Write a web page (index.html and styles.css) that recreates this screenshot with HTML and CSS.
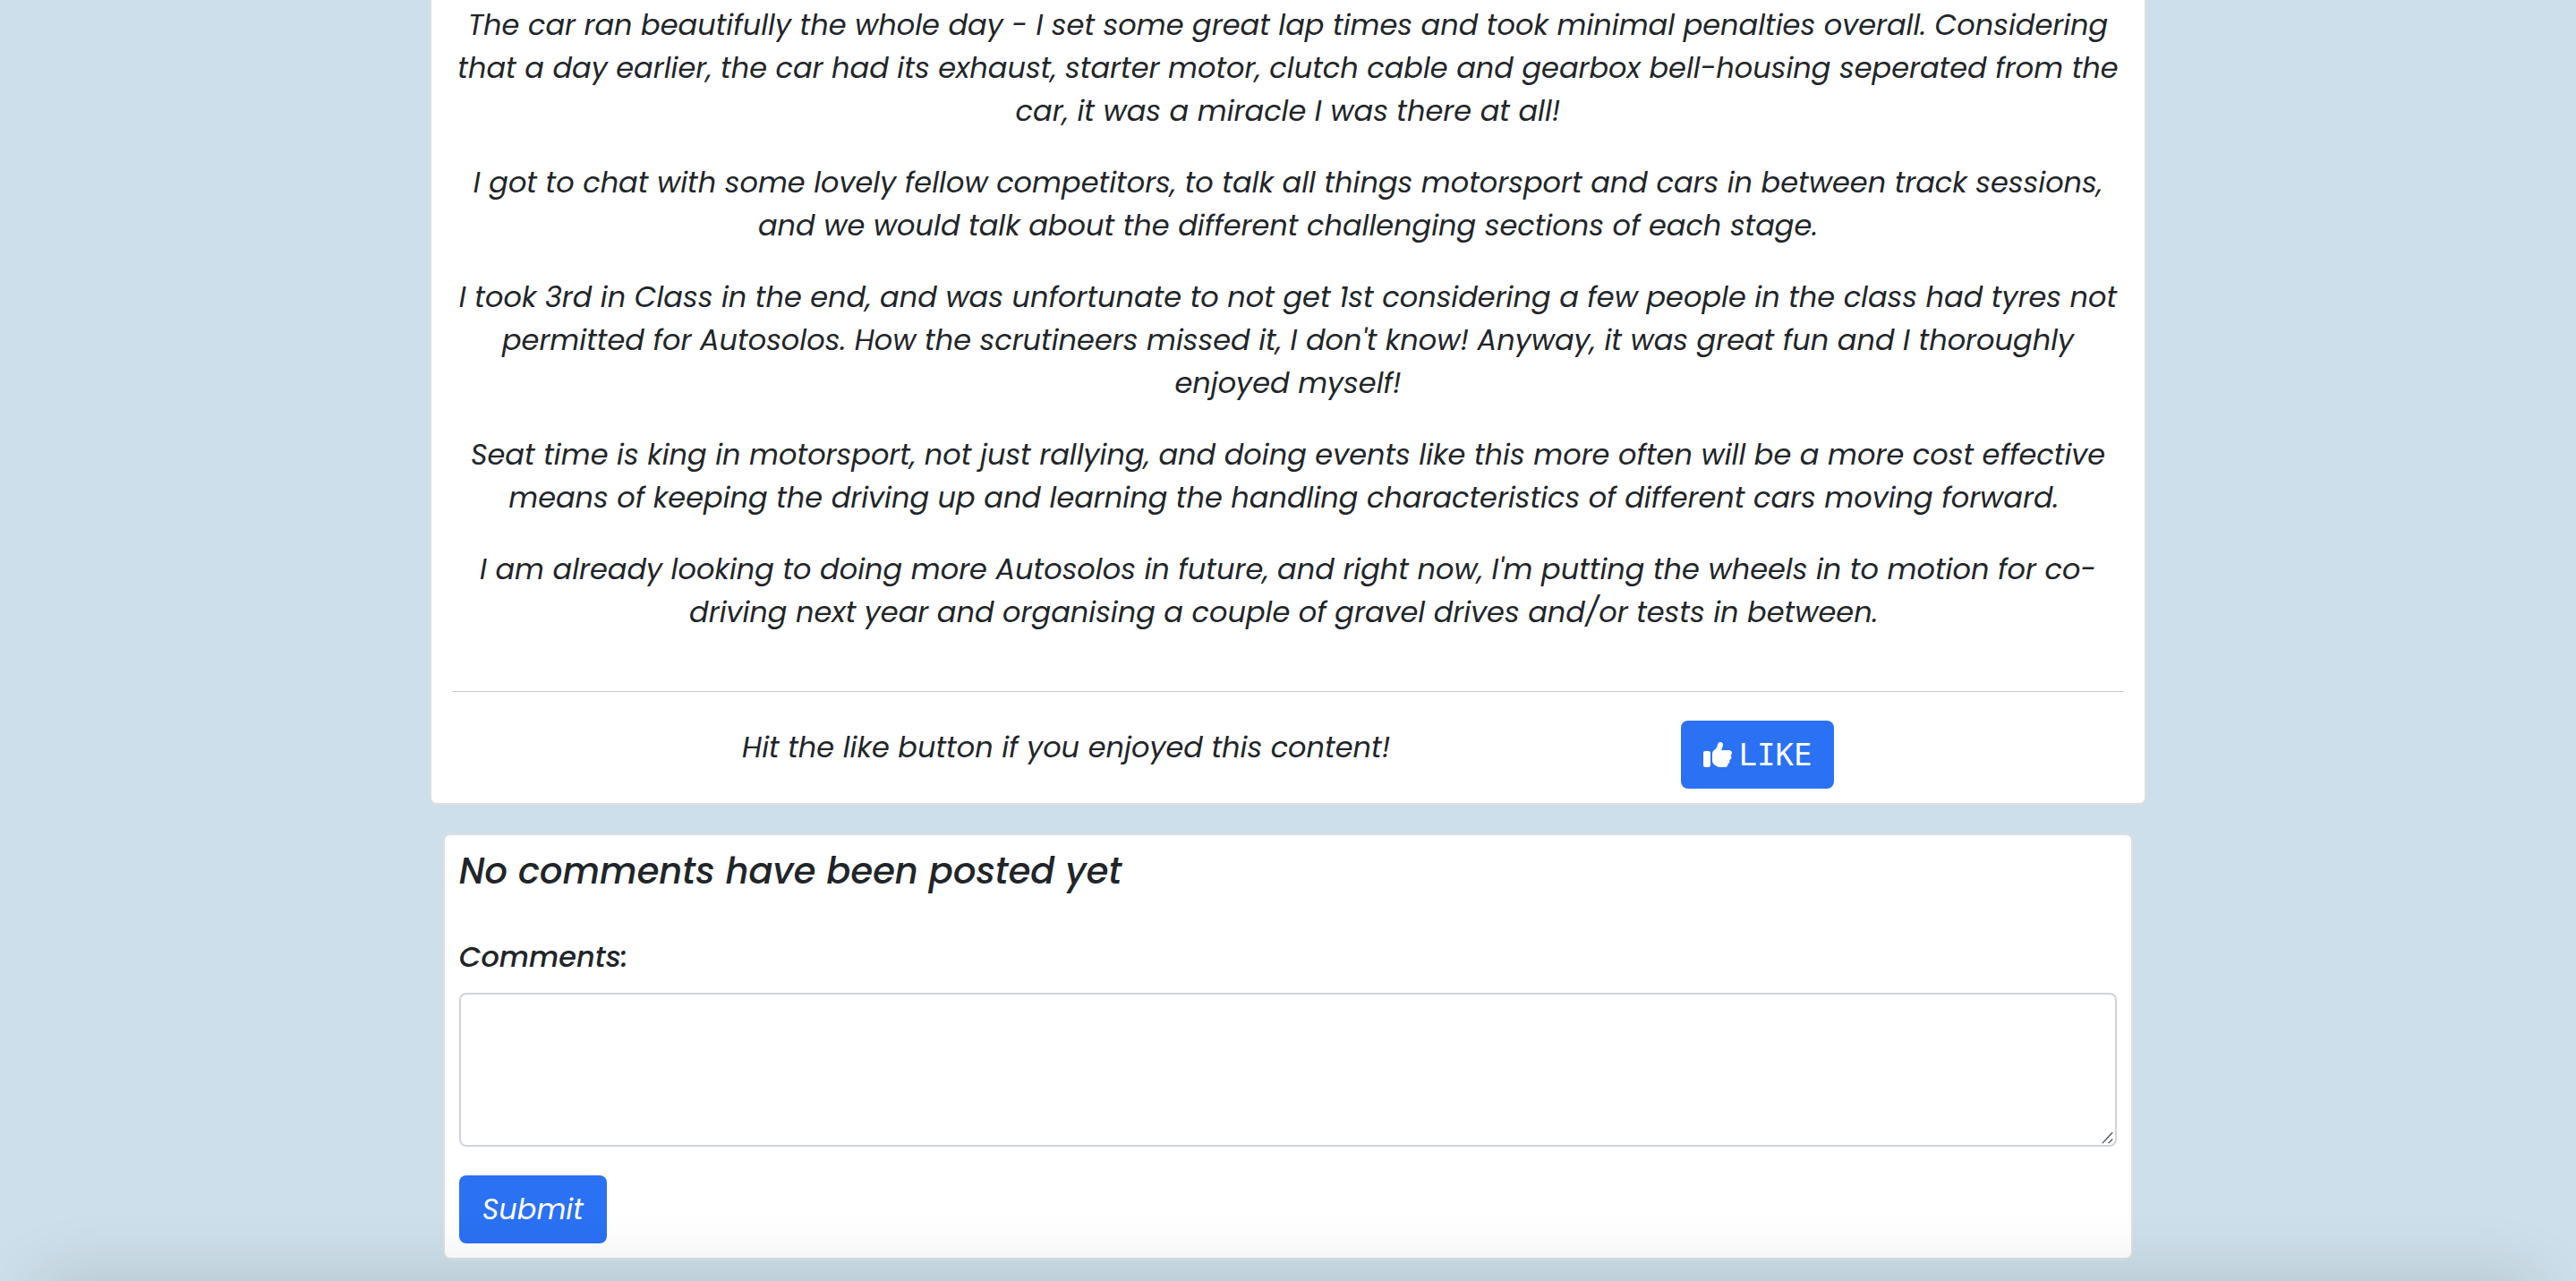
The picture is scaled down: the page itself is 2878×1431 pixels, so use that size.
FILE: index.html
```html
<!DOCTYPE html>
<html lang="en">
<head>
<meta charset="utf-8">
<meta name="viewport" content="width=device-width, initial-scale=1">
<title>Autosolo report</title>
<link rel="stylesheet" href="styles.css">
</head>
<body>
<main class="page">
  <article class="card post">
    <div class="post-body">
      <p>The car ran beautifully the whole day - I set some great lap times and took minimal penalties overall. Considering<br>
      that a day earlier, the car had its exhaust, starter motor, clutch cable and gearbox bell-housing seperated from the<br>
      car, it was a miracle I was there at all!</p>
      <p>I got to chat with some lovely fellow competitors, to talk all things motorsport and cars in between track sessions,<br>
      and we would talk about the different challenging sections of each stage.</p>
      <p>I took 3rd in Class in the end, and was unfortunate to not get 1st considering a few people in the class had tyres not<br>
      permitted for Autosolos. How the scrutineers missed it, I don't know! Anyway, it was great fun and I thoroughly<br>
      enjoyed myself!</p>
      <p>Seat time is king in motorsport, not just rallying, and doing events like this more often will be a more cost effective<br>
      means of keeping the driving up and learning the handling characteristics of different cars moving forward.&nbsp;</p>
      <p>I am already looking to doing more Autosolos in future, and right now, I'm putting the wheels in to motion for co-<br>
      driving next year and organising a couple of gravel drives and/or tests in between.&nbsp;</p>
    </div>
    <hr class="divider">
    <div class="like-row">
      <p class="like-text">Hit the like button if you enjoyed this content!</p>
      <button class="btn btn-like" type="button">
        <svg class="icon" viewBox="0 0 512 512" aria-hidden="true"><path fill="currentColor" d="M313.4 32.9c26 5.2 42.9 30.5 37.7 56.5l-2.3 11.4c-5.3 26.7-15.1 52.1-28.8 75.2H464c26.5 0 48 21.5 48 48c0 18.5-10.5 34.6-25.9 42.6C497 275.4 504 288.9 504 304c0 23.4-16.8 42.9-38.9 47.1c4.4 7.3 6.9 15.8 6.9 24.9c0 21.3-13.9 39.4-33.1 45.6c.7 3.3 1.1 6.8 1.1 10.4c0 26.5-21.5 48-48 48H294.5c-19 0-37.5-5.6-53.3-16.1l-38.5-25.7C176 420.4 160 390.4 160 358.3V247.1c0-29.2 13.3-56.7 36-75l7.4-5.9c26.5-21.2 44.6-51 51.2-84.2l2.3-11.4c5.2-26 30.5-42.9 56.5-37.7zM32 192H96c17.7 0 32 14.3 32 32V448c0 17.7-14.3 32-32 32H32c-17.7 0-32-14.3-32-32V224c0-17.7 14.3-32 32-32z"/></svg>
        <span>LIKE</span>
      </button>
    </div>
  </article>
  <section class="card comments">
    <h2 class="comments-title">No comments have been posted yet</h2>
    <form class="comment-form">
      <label class="comment-label" for="comment">Comments:</label>
      <textarea class="comment-box" id="comment" name="comment"></textarea>
      <button class="btn" type="submit">Submit</button>
    </form>
  </section>
</main>
</body>
</html>
```

FILE: styles.css
```css
* {
  box-sizing: border-box;
}

body {
  margin: 0;
  min-height: 100vh;
  background: #cddfea;
  color: #212529;
  font-family: Poppins, Inter, "Open Sans", sans-serif;
  font-size: 32px;
  font-style: italic;
  line-height: 48px;
  overflow-x: hidden;
}

/* Soft shade rising from the bottom edge of the window */
body::after {
  content: "";
  position: fixed;
  top: 100%;
  left: 45px;
  right: 45px;
  height: 100px;
  box-shadow: 0 0 80px rgba(0, 0, 0, 0.14);
  pointer-events: none;
}

.page {
  width: 66.667%;
  margin: 0 auto;
  padding-bottom: 24px;
}

.card {
  background: #fff;
  border: 2px solid #dfdfdf;
  border-radius: 8px;
}

.post {
  border-top: 0;
  border-top-left-radius: 0;
  border-top-right-radius: 0;
  padding: 4px 23px 16px;
}

.post-body {
  text-align: center;
}

.post-body p {
  margin: 0 0 32px;
}

.divider {
  height: 1px;
  margin: 64px 0 32px;
  border: 0;
  background: #c8c8c8;
}

.like-row {
  display: grid;
  grid-template-columns: 36fr 13fr;
  align-items: start;
}

.like-text {
  margin: 6px 0 0;
  text-align: center;
}

.btn {
  height: 76px;
  padding: 0 26px;
  border: 0;
  border-radius: 8px;
  background: #2a71f3;
  color: #fff;
  font: inherit;
  cursor: pointer;
}

.btn-like {
  display: flex;
  align-items: center;
  gap: 8px;
  justify-self: start;
  padding: 0 25px;
  font-family: "DejaVu Sans Mono", monospace;
  font-size: 34px;
  font-style: normal;
}

.icon {
  width: 32px;
  height: 32px;
}

.comments {
  margin: 32px 15px 0;
  padding: 16px;
}

.comments-title {
  margin: 0 0 48px;
  font-size: 40px;
  font-weight: 500;
  line-height: 48px;
}

.comment-form {
  display: flex;
  flex-direction: column;
  align-items: flex-start;
}

.comment-label {
  margin-bottom: 16px;
  font-weight: 500;
}

.comment-box {
  width: 100%;
  height: 172px;
  margin-bottom: 32px;
  padding: 12px 24px;
  border: 2px solid #ced4da;
  border-radius: 8px;
  background: #fff;
  color: inherit;
  font: inherit;
  resize: vertical;
}

.comment-box::-webkit-resizer {
  background: url("data:image/svg+xml,%3Csvg xmlns='http://www.w3.org/2000/svg' viewBox='0 0 16 16'%3E%3Cpath d='M1 14L13 1M8 14L13 9' stroke='%23555' stroke-width='1.5'/%3E%3C/svg%3E") center / 100% no-repeat;
}
```
